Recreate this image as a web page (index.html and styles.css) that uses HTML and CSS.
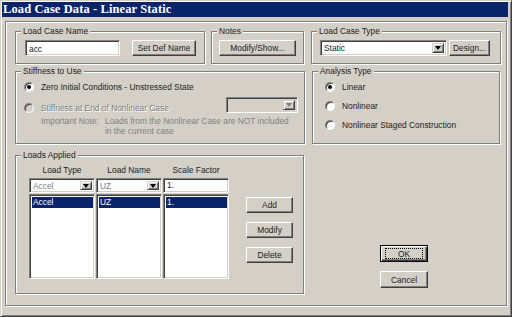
FILE: index.html
```html
<!DOCTYPE html>
<html lang="en">
<head>
    <meta charset="UTF-8">
    <title>Load Case Data - Linear Static</title>
    <link rel="stylesheet" href="styles.css">
</head>
<body>
<div class="window">
    <div class="titlebar">Load Case Data - Linear Static</div>
    <div class="frame">
        <div class="row">
            <div class="group g-name">
                <span class="caption">Load Case Name</span>
                <div class="field tb-name">acc</div>
                <div class="btn btn-defname">Set Def Name</div>
            </div>
            <div class="group g-notes">
                <span class="caption">Notes</span>
                <div class="btn btn-notes">Modify/Show...</div>
            </div>
            <div class="group g-type">
                <span class="caption">Load Case Type</span>
                <div class="field combo combo-type"><span class="combo-text">Static</span><span class="arrow"></span></div>
                <div class="btn btn-design">Design...</div>
            </div>
        </div>

        <div class="row row-mid">
            <div class="group g-stiff">
                <span class="caption">Stiffness to Use</span>
                <div class="option"><span class="radio on"></span>Zero Initial Conditions - Unstressed State</div>
                <div class="option-line">
                    <div class="option disabled"><span class="radio off"></span>Stiffness at End of Nonlinear Case</div>
                    <div class="field combo combo-off"><span class="combo-text"></span><span class="arrow"></span></div>
                </div>
                <div class="note">
                    <span class="note-head">Important Note:</span>
                    <span class="note-text">Loads from the Nonlinear Case are NOT included<br>in the current case</span>
                </div>
            </div>
            <div class="group g-analysis">
                <span class="caption">Analysis Type</span>
                <div class="option"><span class="radio on"></span>Linear</div>
                <div class="option"><span class="radio"></span>Nonlinear</div>
                <div class="option"><span class="radio"></span>Nonlinear Staged Construction</div>
            </div>
        </div>

        <div class="row row-low">
            <div class="group g-loads">
                <span class="caption">Loads Applied</span>
                <div class="loads-table">
                    <div class="cols heads">
                        <span>Load Type</span>
                        <span>Load Name</span>
                        <span>Scale Factor</span>
                    </div>
                    <div class="cols inputs">
                        <div class="field combo combo-grey"><span class="combo-text">Accel</span><span class="arrow"></span></div>
                        <div class="field combo combo-grey"><span class="combo-text">UZ</span><span class="arrow"></span></div>
                        <div class="field tb-scale">1.</div>
                    </div>
                    <div class="cols lists">
                        <div class="list"><div class="sel">Accel</div></div>
                        <div class="list"><div class="sel">UZ</div></div>
                        <div class="list"><div class="sel">1.</div></div>
                    </div>
                </div>
                <div class="loads-buttons">
                    <div class="btn btn-small">Add</div>
                    <div class="btn btn-small">Modify</div>
                    <div class="btn btn-small">Delete</div>
                </div>
            </div>
            <div class="dialog-buttons">
                <div class="btn btn-dlg btn-ok"><span class="focus">OK</span></div>
                <div class="btn btn-dlg">Cancel</div>
            </div>
        </div>
    </div>
</div>
</body>
</html>
```

FILE: styles.css
```css
body {
    margin: 0;
    font-family: "Liberation Sans", Arial, sans-serif;
    font-size: 8.4px;
    color: #222;
    background: #d4d0c8;
}

.window {
    width: 512px;
    height: 317px;
    box-sizing: border-box;
    background: #d4d0c8;
    border: 1px solid;
    border-color: #d4d0c8 #404040 #404040 #d4d0c8;
    box-shadow: inset 1px 1px 0 #fff, inset -1px -1px 0 #808080;
    padding: 1px;
}

.titlebar {
    height: 15px;
    margin-right: 2px;
    padding-left: 1px;
    background: #0a246a;
    color: #fff;
    font: bold 12.5px "Liberation Serif", "Times New Roman", serif;
    letter-spacing: 0.1px;
    line-height: 15px;
    white-space: nowrap;
}

/* etched frames */
.frame {
    box-sizing: border-box;
    width: 502px;
    height: 285px;
    margin: 4px 0 0 3px;
    padding: 9px 0 0 9px;
    border: 1px solid #808080;
    box-shadow: 1px 1px 0 #fff, inset 1px 1px 0 #fff;
}

.group {
    position: relative;
    box-sizing: border-box;
    border: 1px solid #808080;
    box-shadow: 1px 1px 0 #fff, inset 1px 1px 0 #fff;
}

.caption {
    position: absolute;
    top: -6px;
    left: 5px;
    padding: 0 2px;
    background: #d4d0c8;
    line-height: 11px;
    white-space: nowrap;
}

.row {
    display: flex;
    align-items: flex-start;
}

.row-mid {
    margin-top: 7px;
}

.row-low {
    margin-top: 11px;
}

/* controls */
.btn {
    box-sizing: border-box;
    height: 16px;
    border: 1px solid;
    border-color: #fff #404040 #404040 #fff;
    box-shadow: inset -1px -1px 0 #808080;
    display: flex;
    align-items: center;
    justify-content: center;
    white-space: nowrap;
}

.field {
    box-sizing: border-box;
    height: 16px;
    background: #fff;
    border: 1px solid;
    border-color: #808080 #fff #fff #808080;
    box-shadow: inset 1px 1px 0 #404040, inset -1px -1px 0 #d4d0c8;
    padding: 2px 2px 2px 3px;
    line-height: 12px;
    white-space: nowrap;
}

.combo {
    display: flex;
    padding: 2px;
}

.combo-text {
    flex: 1;
    padding-left: 1px;
    line-height: 10px;
}

.arrow {
    box-sizing: border-box;
    width: 12px;
    background: #d4d0c8;
    border: 1px solid;
    border-color: #d4d0c8 #404040 #404040 #d4d0c8;
    box-shadow: inset 1px 1px 0 #fff, inset -1px -1px 0 #808080;
    display: flex;
    align-items: center;
    justify-content: center;
}

.arrow::before {
    content: "";
    border-left: 3.5px solid transparent;
    border-right: 3.5px solid transparent;
    border-top: 4px solid #000;
}

/* load case name / notes / type */
.g-name,
.g-notes,
.g-type {
    display: flex;
    height: 33px;
    padding-top: 8px;
}

.g-name {
    width: 190px;
    padding-left: 9px;
}

.tb-name {
    width: 95px;
}

.btn-defname {
    width: 64px;
    margin-left: 12px;
}

.g-notes {
    width: 93px;
    margin-left: 6px;
    padding-left: 7px;
}

.btn-notes {
    width: 77px;
}

.g-type {
    width: 190px;
    margin-left: 7px;
    padding-left: 8px;
}

.combo-type {
    width: 127px;
}

.btn-design {
    width: 41px;
    margin-left: 2px;
}

/* radio options */
.option {
    display: flex;
    align-items: center;
    height: 12px;
    white-space: nowrap;
}

.radio {
    position: relative;
    box-sizing: border-box;
    width: 10px;
    height: 10px;
    margin-right: 7px;
    border-radius: 50%;
    background: #fff;
    border: 1px solid;
    border-color: #808080 #fff #fff #808080;
    box-shadow: inset 1px 1px 0 #404040;
}

.radio.on::after {
    content: "";
    position: absolute;
    left: 2px;
    top: 2px;
    width: 4px;
    height: 4px;
    border-radius: 50%;
    background: #000;
}

.radio.off {
    background: #d4d0c8;
}

.disabled {
    color: #808080;
    text-shadow: 1px 1px 0 #fff;
}

.g-stiff {
    width: 290px;
    height: 73px;
    padding: 9px 6px 0 8px;
}

.option-line {
    display: flex;
    height: 16px;
    margin-top: 4px;
}

.option-line .option {
    align-self: flex-end;
    margin-bottom: -1px;
}

.combo-off {
    width: 72px;
    margin-left: auto;
    background: #d4d0c8;
}

.combo-off .arrow::before {
    border-top-color: #808080;
}

.note {
    display: flex;
    margin: 4px 0 0 17px;
    color: #808080;
    line-height: 9.5px;
    white-space: nowrap;
}

.note-head {
    width: 64px;
}

.g-analysis {
    width: 188px;
    height: 73px;
    margin-left: 7px;
    padding: 9px 0 0 12px;
}

.g-analysis .option + .option {
    margin-top: 7px;
}

/* loads applied */
.g-loads {
    display: flex;
    width: 289px;
    height: 139px;
    padding: 9px 0 0 13px;
}

.cols {
    display: grid;
    grid-template-columns: 66px 66px 66px;
    column-gap: 1px;
}

.heads {
    line-height: 10px;
    text-align: center;
}

.inputs {
    margin-top: 3px;
}

.inputs .field {
    height: 15px;
}

.combo-grey .combo-text {
    color: #808080;
}

.tb-scale {
    padding-top: 1px;
    line-height: 11px;
}

.lists {
    margin-top: 1px;
}

.list {
    box-sizing: border-box;
    height: 85px;
    background: #fff;
    border: 1px solid;
    border-color: #808080 #fff #fff #808080;
    box-shadow: inset 1px 1px 0 #404040, inset -1px -1px 0 #d4d0c8;
    padding: 2px 1px 0 2px;
}

.sel {
    height: 11px;
    line-height: 11px;
    padding-left: 1px;
    background: #0a246a;
    color: #fff;
}

.loads-buttons {
    display: flex;
    flex-direction: column;
    gap: 9px;
    margin: 32px 0 0 17px;
}

.btn-small {
    width: 47px;
}

.dialog-buttons {
    display: flex;
    flex-direction: column;
    gap: 9px;
    margin: 90px 0 0 76px;
}

.btn-dlg {
    width: 48px;
    height: 17px;
}

.btn-ok {
    border-color: #000;
    box-shadow: inset 1px 1px 0 #fff, inset -1px -1px 0 #404040, inset -2px -2px 0 #808080;
}

.focus {
    box-sizing: border-box;
    width: 38px;
    height: 11px;
    border: 1px dotted #000;
    display: flex;
    align-items: center;
    justify-content: center;
}
```
